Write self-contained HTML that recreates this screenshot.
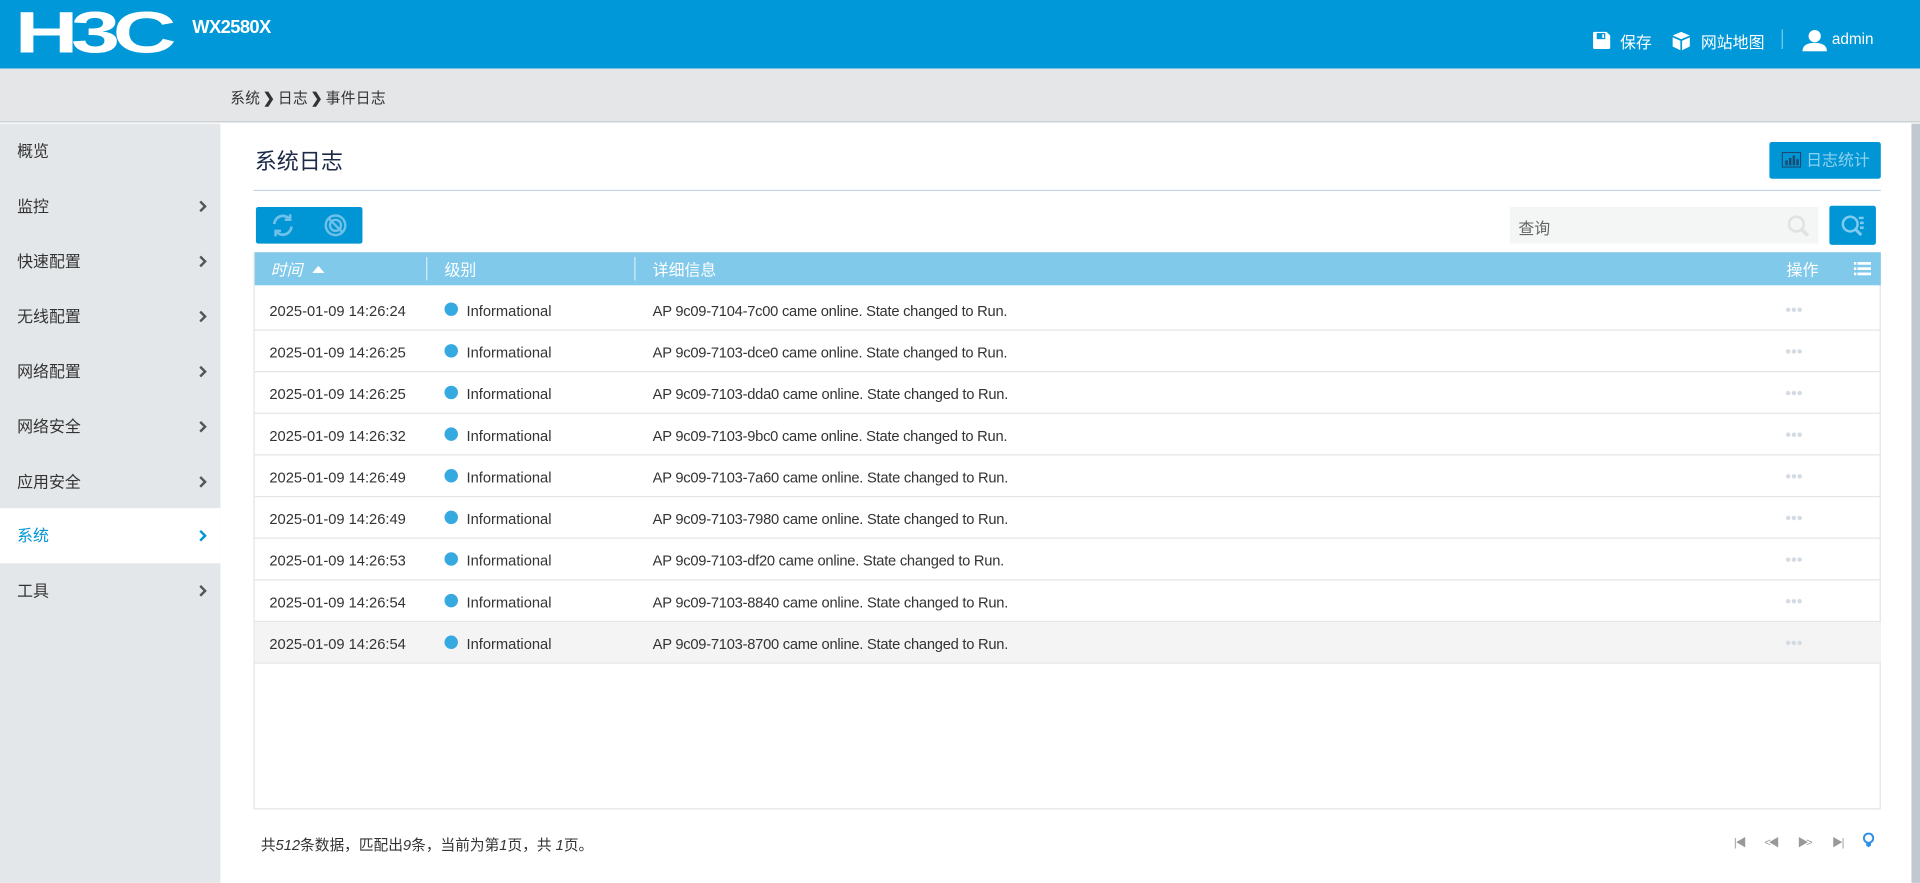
<!DOCTYPE html>
<html><head><meta charset="utf-8">
<style>
*{margin:0;padding:0;box-sizing:border-box}
html,body{width:1920px;height:882px;overflow:hidden;background:#fff}
#w{position:absolute;left:0;top:0;width:1568px;height:720.3px;transform:scale(1.22449);transform-origin:0 0;font-family:"Liberation Sans","Noto Sans CJK SC",sans-serif;color:#333;font-size:12px}
.a{position:absolute}
.hdr{left:0;top:0;width:1568px;height:56px;background:#0098d8}
.bc{left:0;top:56px;width:1568px;height:44px;background:#e4e6e8;border-bottom:1px solid #c9cccf}
.side{left:0;top:101px;width:180px;height:620px;background:#e4e7e9}
.mi{position:absolute;left:0;width:180px;height:45px;line-height:45px;padding-left:14px;font-size:13px;color:#333}
.mi svg{position:absolute;left:162px;top:17px}
.mi.on{background:#fff;color:#0096d6}
.row{position:absolute;left:208px;width:1328px;height:34px;border-bottom:1px solid #e5e5e5;font-size:12px;color:#333}
.row span{position:absolute;top:11px}
.row span.m{letter-spacing:-0.2px}
.dot{position:absolute;left:155px;top:11px;width:11px;height:11px;border-radius:50%;background:#36a9e1}
.dd{position:absolute;left:1250px;top:15px;width:14px;height:4px;background:radial-gradient(circle,#d3dae2 1.6px,transparent 2px) 0 0/4.7px 4px repeat-x}
.bc b{margin:0 1px}
</style></head><body><div id="w">
<div class="a hdr"></div>
<div class="a" style="left:12px;top:7px;color:#fff;font:bold 48px/42px 'Liberation Sans',sans-serif;letter-spacing:-4px;transform:scaleX(1.5);transform-origin:0 0">H3C</div>
<div class="a" style="left:157px;top:14px;color:#fff;font:bold 15px 'Liberation Sans',sans-serif;letter-spacing:-0.5px">WX2580X</div>
<svg class="a" style="left:1300px;top:25px" width="16" height="16" viewBox="0 0 16 16"><path d="M2 1h10l3 3v10a1 1 0 0 1-1 1H2a1 1 0 0 1-1-1V2a1 1 0 0 1 1-1z" fill="#fff"/><rect x="4" y="2" width="7" height="5" fill="#0098d8"/><rect x="8.5" y="3" width="1.5" height="3" fill="#fff"/></svg>
<div class="a" style="left:1323px;top:24px;color:#fff;font-size:13px">保存</div>
<svg class="a" style="left:1365px;top:25px" width="16" height="17" viewBox="0 0 16 17"><path d="M8 1l7 3-7 3-7-3z M1 5.5l6.3 2.8V16L1 13z M15 5.5l-6.3 2.8V16L15 13z" fill="#fff"/></svg>
<div class="a" style="left:1389px;top:24px;color:#fff;font-size:13px">网站地图</div>
<div class="a" style="left:1455px;top:24px;width:1px;height:16px;background:#7fcbed"></div>
<svg class="a" style="left:1472px;top:24px" width="20" height="18" viewBox="0 0 20 18"><circle cx="10" cy="5.5" r="5" fill="#fff"/><path d="M0 18c0-5 4-7 10-7s10 2 10 7z" fill="#fff"/></svg>
<div class="a" style="left:1496px;top:25px;color:#fff;font-size:12.5px">admin</div>
<div class="a bc"></div>
<div class="a" style="left:188px;top:71px;font-size:12px;color:#333;letter-spacing:0.3px">系统<b style="margin:0 2px">❯</b>日志<b style="margin:0 2px">❯</b>事件日志</div>
<div class="a side">
<div class="mi" style="top:0">概览</div>
<div class="mi" style="top:45px">监控<svg width="7" height="11" viewBox="0 0 7 11"><path d="M1.5 1.5l4 4-4 4" fill="none" stroke="#555" stroke-width="2"/></svg></div>
<div class="mi" style="top:90px">快速配置<svg width="7" height="11" viewBox="0 0 7 11"><path d="M1.5 1.5l4 4-4 4" fill="none" stroke="#555" stroke-width="2"/></svg></div>
<div class="mi" style="top:135px">无线配置<svg width="7" height="11" viewBox="0 0 7 11"><path d="M1.5 1.5l4 4-4 4" fill="none" stroke="#555" stroke-width="2"/></svg></div>
<div class="mi" style="top:180px">网络配置<svg width="7" height="11" viewBox="0 0 7 11"><path d="M1.5 1.5l4 4-4 4" fill="none" stroke="#555" stroke-width="2"/></svg></div>
<div class="mi" style="top:225px">网络安全<svg width="7" height="11" viewBox="0 0 7 11"><path d="M1.5 1.5l4 4-4 4" fill="none" stroke="#555" stroke-width="2"/></svg></div>
<div class="mi" style="top:270px">应用安全<svg width="7" height="11" viewBox="0 0 7 11"><path d="M1.5 1.5l4 4-4 4" fill="none" stroke="#555" stroke-width="2"/></svg></div>
<div class="mi on" style="top:314px">系统<svg width="7" height="11" viewBox="0 0 7 11"><path d="M1.5 1.5l4 4-4 4" fill="none" stroke="#0096d6" stroke-width="2"/></svg></div>
<div class="mi" style="top:359px">工具<svg width="7" height="11" viewBox="0 0 7 11"><path d="M1.5 1.5l4 4-4 4" fill="none" stroke="#555" stroke-width="2"/></svg></div>
</div>
<div class="a" style="left:1561px;top:101px;width:7px;height:620px;background:#c1c8d1"></div>
<div class="a" style="left:208px;top:118px;font-size:18px;color:#1c2a48">系统日志</div>
<div class="a" style="left:1445px;top:116px;width:91px;height:30px;background:#0096d6;border-radius:2px;color:#8fd0ee;font-size:13px;line-height:30px;padding-left:30px">日志统计</div>
<svg class="a" style="left:1455px;top:124px" width="16" height="13" viewBox="0 0 16 13"><rect x=".5" y=".5" width="15" height="12" fill="none" stroke="#1a4a6e"/><rect x="3" y="7" width="2" height="4" fill="#1a4a6e"/><rect x="6" y="5" width="2" height="6" fill="#1a4a6e"/><rect x="9" y="3" width="2" height="8" fill="#1a4a6e"/><rect x="12" y="6" width="2" height="5" fill="#1a4a6e"/></svg>
<div class="a" style="left:207px;top:155px;width:1329px;height:1px;background:#c4d6e4"></div>
<div class="a" style="left:209px;top:169px;width:87px;height:30px;background:#0096d6;border-radius:2px"></div>
<svg class="a" style="left:220px;top:174px" width="22" height="20" viewBox="0 0 22 20" fill="none" stroke="#6fc0e8" stroke-width="2.2"><path d="M4 9a7 7 0 0 1 12.5-4M18 11a7 7 0 0 1-12.5 4"/><path d="M17 1v4.5h-4.5M5 19v-4.5h4.5" stroke-width="2"/></svg>
<svg class="a" style="left:264px;top:174px" width="20" height="20" viewBox="0 0 20 20" fill="none" stroke="#6fc0e8" stroke-width="2"><circle cx="10" cy="10" r="8"/><circle cx="10" cy="10" r="4.5"/><path d="M4.5 4.5l11 11"/></svg>
<div class="a" style="left:1233px;top:169px;width:252px;height:30px;background:#f4f6f6"></div>
<div class="a" style="left:1240px;top:176px;font-size:13px;color:#666">查询</div>
<svg class="a" style="left:1459px;top:175px" width="20" height="20" viewBox="0 0 20 20" fill="none" stroke="#e0e3e4" stroke-width="2.2"><circle cx="8" cy="8" r="6"/><path d="M12.5 12.5l5 5" stroke-width="3"/></svg>
<div class="a" style="left:1494px;top:168px;width:38px;height:32px;background:#0096d6;border-radius:2px"></div>
<svg class="a" style="left:1503px;top:175px" width="22" height="19" viewBox="0 0 22 19" fill="none" stroke="#7fcaef" stroke-width="2"><circle cx="8" cy="8" r="6"/><path d="M12 12l5 5" stroke-width="2.5"/><path d="M15 3h4M16 7h3M16 11h3"/></svg>
<div class="a" style="left:207px;top:206px;width:1329px;height:455px;border:1px solid #e2e4e6"></div>
<div class="a" style="left:208px;top:206px;width:1328px;height:27px;background:#80c9ea"></div>
<div class="a" style="left:348px;top:210px;width:1px;height:19px;background:#d6ecf7"></div>
<div class="a" style="left:518px;top:210px;width:1px;height:19px;background:#d6ecf7"></div>
<div class="a" style="left:221px;top:210px;color:#fff;font-size:13px;font-style:italic">时间</div>
<div class="a" style="left:255px;top:217px;width:0;height:0;border-left:5px solid transparent;border-right:5px solid transparent;border-bottom:6px solid #fff"></div>
<div class="a" style="left:363px;top:210px;color:#fff;font-size:13px">级别</div>
<div class="a" style="left:533px;top:210px;color:#fff;font-size:13px">详细信息</div>
<div class="a" style="left:1459px;top:210px;color:#fff;font-size:13px">操作</div>
<svg class="a" style="left:1514px;top:214px" width="14" height="11" viewBox="0 0 14 11" fill="#fff"><rect x="0" y="0" width="2" height="2.2"/><rect x="3" y="0" width="11" height="2.2"/><rect x="0" y="4.3" width="2" height="2.2"/><rect x="3" y="4.3" width="11" height="2.2"/><rect x="0" y="8.6" width="2" height="2.2"/><rect x="3" y="8.6" width="11" height="2.2"/></svg>

<div class="row" style="top:236px"><span style="left:12px">2025-01-09 14:26:24</span><i class="dot"></i><span style="left:173px">Informational</span><span class="m" style="left:325px">AP 9c09-7104-7c00 came online. State changed to Run.</span><i class="dd"></i></div>
<div class="row" style="top:270px"><span style="left:12px">2025-01-09 14:26:25</span><i class="dot"></i><span style="left:173px">Informational</span><span class="m" style="left:325px">AP 9c09-7103-dce0 came online. State changed to Run.</span><i class="dd"></i></div>
<div class="row" style="top:304px"><span style="left:12px">2025-01-09 14:26:25</span><i class="dot"></i><span style="left:173px">Informational</span><span class="m" style="left:325px">AP 9c09-7103-dda0 came online. State changed to Run.</span><i class="dd"></i></div>
<div class="row" style="top:338px"><span style="left:12px">2025-01-09 14:26:32</span><i class="dot"></i><span style="left:173px">Informational</span><span class="m" style="left:325px">AP 9c09-7103-9bc0 came online. State changed to Run.</span><i class="dd"></i></div>
<div class="row" style="top:372px"><span style="left:12px">2025-01-09 14:26:49</span><i class="dot"></i><span style="left:173px">Informational</span><span class="m" style="left:325px">AP 9c09-7103-7a60 came online. State changed to Run.</span><i class="dd"></i></div>
<div class="row" style="top:406px"><span style="left:12px">2025-01-09 14:26:49</span><i class="dot"></i><span style="left:173px">Informational</span><span class="m" style="left:325px">AP 9c09-7103-7980 came online. State changed to Run.</span><i class="dd"></i></div>
<div class="row" style="top:440px"><span style="left:12px">2025-01-09 14:26:53</span><i class="dot"></i><span style="left:173px">Informational</span><span class="m" style="left:325px">AP 9c09-7103-df20 came online. State changed to Run.</span><i class="dd"></i></div>
<div class="row" style="top:474px"><span style="left:12px">2025-01-09 14:26:54</span><i class="dot"></i><span style="left:173px">Informational</span><span class="m" style="left:325px">AP 9c09-7103-8840 came online. State changed to Run.</span><i class="dd"></i></div>
<div class="row" style="top:508px;background:#f4f4f4"><span style="left:12px">2025-01-09 14:26:54</span><i class="dot"></i><span style="left:173px">Informational</span><span class="m" style="left:325px">AP 9c09-7103-8700 came online. State changed to Run.</span><i class="dd"></i></div>

<div class="a" style="left:213px;top:681px;font-size:12px;color:#333">共<i>512</i>条数据，匹配出<i>9</i>条，当前为第<i>1</i>页，共 <i>1</i>页。</div>
<div class="a" style="left:1416px;top:681px;font-size:9px;color:#999;letter-spacing:-1px">|◀</div>
<div class="a" style="left:1441px;top:681px;font-size:9px;color:#999;letter-spacing:-2px">&lt;◀</div>
<div class="a" style="left:1468px;top:681px;font-size:9px;color:#999;letter-spacing:-2px">▶&gt;</div>
<div class="a" style="left:1496px;top:681px;font-size:9px;color:#999;letter-spacing:-1px">▶|</div>
<svg class="a" style="left:1521px;top:680px" width="10" height="13" viewBox="0 0 10 13"><circle cx="5" cy="4.5" r="3.8" fill="none" stroke="#2f8fe6" stroke-width="1.6"/><path d="M3 8h4v2.5L5 12 3 10.5z" fill="#2f8fe6"/></svg>
</div></body></html>
